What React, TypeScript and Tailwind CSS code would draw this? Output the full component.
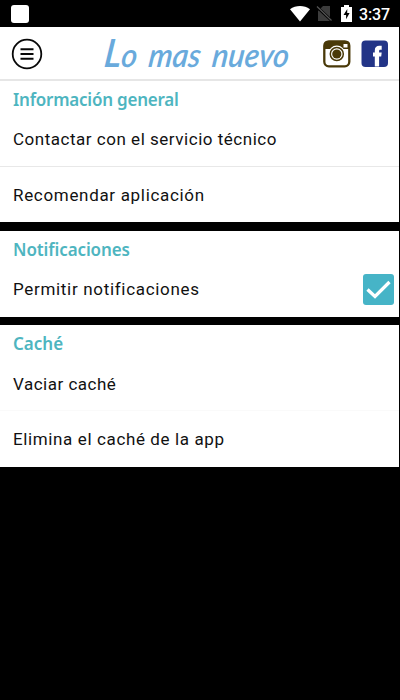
import React from 'react';

function StatusBar() {
  return (
    <div className="flex h-[27px] shrink-0 items-center bg-black pl-[11px] pr-[10px] text-white">
      <div className="h-[18px] w-[18px] rounded-[3px] bg-white" />
      <svg className="ml-auto" width="20" height="16" viewBox="0 0 20 16">
        <path d="M0 3.2C5.8-1 14.2-1 20 3.2L10 15.5Z" fill="#fff" />
      </svg>
      <svg className="ml-[6px]" width="17" height="17" viewBox="0 0 17 17">
        <path d="M7 1h7v15H2V6z" fill="#3c3c3c" />
        <path d="M1.5 2.5l14 13" stroke="#000" strokeWidth="3" />
        <path d="M1 1.5l14.5 14" stroke="#555" strokeWidth="1.2" />
      </svg>
      <svg className="ml-[8px]" width="11" height="17" viewBox="0 0 11 17">
        <path d="M0 2h3V0h5v2h3v15H0z" fill="#fff" />
        <path d="M6.3 4L2.5 10h2.6v4.2L8.6 8H6.2z" fill="#000" />
      </svg>
      <span className="ml-[7px] w-[31px] whitespace-nowrap pt-[2px] font-['Roboto',sans-serif] text-[16px] leading-[25px] font-medium tracking-[-0.1px]">3:37</span>
    </div>
  );
}

function Header() {
  return (
    <header className="flex h-[54px] shrink-0 items-center border-b-2 border-[#e6e6e6] bg-white pl-[11px] pr-[10px] pt-px">
      <svg width="32" height="32" viewBox="0 0 32 32" fill="none" stroke="#080808">
        <circle cx="16" cy="16" r="14.3" strokeWidth="1.8" />
        <path d="M9.5 11.2h13M9.5 16h13M9.5 20.8h13" strokeWidth="2" />
      </svg>
      <h1 className="ml-[59px] w-[187px] origin-bottom-left -skew-x-8 scale-x-[0.92] whitespace-nowrap pb-px font-['Lato',sans-serif] text-[33px] leading-[40px] font-semibold italic [word-spacing:5px] text-[#69aadc]">
        <span className="text-[39px]">L</span>o mas nuevo
      </h1>
      <svg className="ml-auto" width="28" height="28" viewBox="0 0 28 28">
        <rect x="1.3" y="1.3" width="25" height="25" rx="4.5" fill="#fff" stroke="#493908" strokeWidth="2.3" />
        <path d="M1 9V5a4 4 0 014-4h18a4 4 0 014 4v4z" fill="#493908" />
        <rect x="20.5" y="4" width="4" height="3.5" fill="#fff" />
        <circle cx="13.8" cy="14" r="8.4" fill="#fff" />
        <circle cx="13.8" cy="14" r="6.5" fill="#fff" stroke="#493908" strokeWidth="1.5" />
        <circle cx="13.8" cy="14" r="4.6" fill="#493908" />
      </svg>
      <svg className="ml-[10px]" width="28" height="28" viewBox="0 0 28 28">
        <rect x="0.5" y="0.5" width="26.5" height="26.5" rx="4" fill="#223487" />
        <path d="M13.8 26.5V16.5H12v-4h1.8V10.5c0-3.2 1.7-4.7 4.5-4.7h2.4v4h-1.2c-1 0-1.4.4-1.4 1.3v1.4h2.6l-.5 4h-2.1v10z" fill="#fff" />
      </svg>
    </header>
  );
}

function Heading({ children, className }: { children: React.ReactNode; className: string }) {
  return <h2 className={`h-[32px] pl-[13px] pt-[6px] font-['Noto_Sans',sans-serif] text-[17px] leading-[25px] font-semibold whitespace-nowrap text-[#4eb5c0] ${className}`}>{children}</h2>;
}

function Label({ children, className }: { children: React.ReactNode; className: string }) {
  return <span className={`whitespace-nowrap font-['Roboto',sans-serif] text-[17px] leading-[24px] text-[#111] ${className}`}>{children}</span>;
}

export default function App() {
  return (
    <div className="flex h-[700px] w-[400px] flex-col overflow-hidden bg-black">
      <StatusBar />
      <main className="mr-px flex flex-col">
        <Header />
        <section className="h-[141px] bg-white">
          <Heading className="tracking-[-0.22px]">Información general</Heading>
          <div className="flex h-[54px] items-center border-b border-[#e8e8e8] pb-[2px] pl-[13px]">
            <Label className="tracking-[0.52px]">Contactar con el servicio técnico</Label>
          </div>
          <div className="flex h-[55px] items-center pl-[13px]">
            <Label className="tracking-[0.68px]">Recomendar aplicación</Label>
          </div>
        </section>
        <section className="mt-[9px] h-[86px] bg-white">
          <Heading className="tracking-[-0.1px]">Notificaciones</Heading>
          <div className="flex h-[52px] items-center justify-between pl-[13px] pr-[5px]">
            <Label className="tracking-[0.68px]">Permitir notificaciones</Label>
            <svg width="31" height="31" viewBox="0 0 31 31">
              <rect width="31" height="31" rx="3" fill="#46b4c7" />
              <path d="M4.5 15.5l7.5 7L26.5 8" fill="none" stroke="#fff" strokeWidth="3.3" />
            </svg>
          </div>
        </section>
        <section className="mt-[8px] h-[142px] bg-white">
          <Heading className="tracking-[0px]">Caché</Heading>
          <div className="flex h-[54px] items-center border-b border-[#fafafa] pl-[13px]">
            <Label className="tracking-[0.5px]">Vaciar caché</Label>
          </div>
          <div className="flex h-[56px] items-center pl-[13px]">
            <Label className="tracking-[0.62px]">Elimina el caché de la app</Label>
          </div>
        </section>
      </main>
    </div>
  );
}
